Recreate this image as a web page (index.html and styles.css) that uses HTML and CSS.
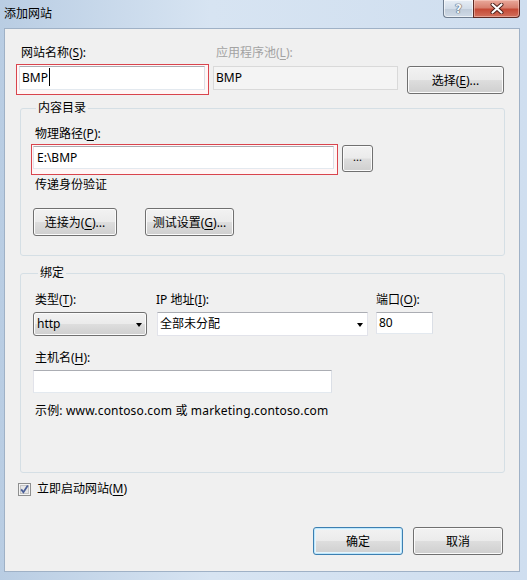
FILE: index.html
```html
<!DOCTYPE html>
<html lang="zh-CN">
<head>
<meta charset="utf-8">
<title>添加网站</title>
<link rel="stylesheet" href="styles.css">
</head>
<body>
<div class="window">
  <div class="titlebar">
    <span class="title">添加网站</span>
    <div class="caption">
      <div class="cap cap-help"><span class="q">?</span></div>
      <div class="cap cap-close">
        <svg width="14" height="11" viewBox="0 0 14 11"><path d="M2.5 1.5 L11.5 9.5 M11.5 1.5 L2.5 9.5" stroke="#4a1e18" stroke-width="4" stroke-linecap="round"/><path d="M2.5 1.5 L11.5 9.5 M11.5 1.5 L2.5 9.5" stroke="#ffffff" stroke-width="2.2" stroke-linecap="round"/></svg>
      </div>
    </div>
  </div>
  <div class="frame">
    <div class="client">
      <div class="site-grid">
        <div class="lbl lbl-site">网站名称(<u>S</u>):</div>
        <div class="lbl lbl-pool dis">应用程序池(<u>L</u>):</div>
        <div></div>
        <div class="err err-site"><div class="input in-site">BMP<i class="caret"></i></div></div>
        <div class="input ro">BMP</div>
        <button class="btn btn-select">选择(<u>E</u>)...</button>
      </div>

      <fieldset class="group group-content">
        <legend>内容目录</legend>
        <div class="lbl lbl-path">物理路径(<u>P</u>):</div>
        <div class="path-row">
          <div class="err err-path"><div class="input in-path">E:\BMP</div></div>
          <button class="btn btn-browse">...</button>
        </div>
        <div class="lbl lbl-auth">传递身份验证</div>
        <div class="btn-row">
          <button class="btn btn-connect">连接为(<u>C</u>)...</button>
          <button class="btn btn-test">测试设置(<u>G</u>)...</button>
        </div>
      </fieldset>

      <fieldset class="group group-bind">
        <legend>绑定</legend>
        <div class="bind-row">
          <div class="bcol bcol-type">
            <div class="lbl lbl-type">类型(<u>T</u>):</div>
            <div class="combo combo-btn">http<span class="arrow"></span></div>
          </div>
          <div class="bcol bcol-ip">
            <div class="lbl lbl-ip">IP 地址(<u>I</u>):</div>
            <div class="combo combo-field">全部未分配<span class="arrow"></span></div>
          </div>
          <div class="bcol bcol-port">
            <div class="lbl">端口(<u>O</u>):</div>
            <div class="input in-port">80</div>
          </div>
        </div>
        <div class="lbl lbl-host">主机名(<u>H</u>):</div>
        <div class="input in-host"></div>
        <div class="lbl lbl-example">示例: www.contoso.com 或 marketing.contoso.com</div>
      </fieldset>

      <div class="check-row">
        <span class="checkbox">
          <svg width="13" height="13" viewBox="0 0 13 13"><rect x="0.5" y="0.5" width="12" height="12" fill="#f4f4f4" stroke="#8e8f8f"/><rect x="2.5" y="2.5" width="8" height="8" fill="#e6e6e6" stroke="#c4c4c4"/><path d="M3.2 6.4 L5.4 9.2 L9.8 2.6" fill="none" stroke="#4a5f97" stroke-width="1.8"/></svg>
        </span>
        <span class="lbl lbl-start">立即启动网站(<u>M</u>)</span>
      </div>

      <div class="dlg-btns">
        <button class="btn btn-default">确定</button>
        <button class="btn btn-cancel">取消</button>
      </div>
    </div>
  </div>
</div>
</body>
</html>
```

FILE: styles.css
```css
* { box-sizing: border-box; }
html, body { margin: 0; padding: 0; }
body {
  width: 527px;
  height: 580px;
  overflow: hidden;
  font-family: "Noto Sans", "Noto Sans CJK SC", sans-serif;
  font-size: 12px;
  color: #000;
  background: #c7d8ec;
}
u { text-decoration: underline; text-underline-offset: 2px; }

.window {
  width: 527px;
  height: 580px;
  display: flex;
  flex-direction: column;
  background: linear-gradient(90deg, #b9cde3 0%, #d7e4f2 40%, #cfdeef 100%);
}

.titlebar {
  height: 28px;
  display: flex;
  align-items: flex-start;
  justify-content: space-between;
  flex: none;
}
.title {
  line-height: 28px;
  padding-left: 4px;
  font-size: 12px;
  color: #000;
}
.caption {
  display: flex;
  margin-right: 7px;
}
.cap {
  height: 18px;
  border: 1px solid #6f7d8f;
  border-top: none;
  display: flex;
  align-items: center;
  justify-content: center;
}
.cap-help {
  width: 30px;
  border-radius: 0 0 0 4px;
  border-right: none;
  background: linear-gradient(#e6edf5 0%, #d3dde9 50%, #bfcbd9 51%, #cfdae6 100%);
  box-shadow: inset 0 0 0 1px rgba(255,255,255,0.6);
}
.q {
  font-family: "DejaVu Sans", sans-serif;
  font-weight: bold;
  font-size: 12px;
  line-height: 12px;
  color: #f4f6f9;
  text-shadow: 0 0 1px #4b586a, 0 0 1px #4b586a, 0 0 1px #4b586a;
}
.cap-close {
  width: 47px;
  border-radius: 0 0 4px 0;
  border-color: #5e2a24;
  background: linear-gradient(#e9a99b 0%, #d8806f 45%, #c54a36 55%, #d2705c 100%);
  box-shadow: inset 0 0 0 1px rgba(255,220,210,0.45);
}

.frame {
  flex: 1;
  padding: 0 7px 8px 4px;
  display: flex;
}
.client {
  flex: 1;
  background: #f0f0f0;
  border: 1px solid #9fb1c6;
  display: flex;
  flex-direction: column;
}

.lbl { line-height: 16px; white-space: nowrap; }
.dis { color: #a3a3a3; }

/* top row */
.site-grid {
  display: grid;
  grid-template-columns: 193px 185px 97px;
  grid-template-rows: 16px 31px;
  column-gap: 4px;
  row-gap: 3px;
  margin: 16px 0 0 11px;
}
.lbl-site { padding-left: 5px; }
.lbl-pool { padding-left: 3px; }

.err {
  border: 1px solid #d9444d;
  background: #fff6f6;
  padding: 1px 3px 4px 2px;
}
.input {
  background: #fff;
  border: 1px solid #abadb3;
  border-color: #abadb3 #dbdfe6 #e3e9ef #e2e3ea;
  padding-left: 2px;
  line-height: 20px;
  white-space: nowrap;
}
.in-site { height: 24px; line-height: 22px; }
.caret {
  display: inline-block;
  width: 1px;
  height: 18px;
  background: #000;
  vertical-align: middle;
  margin-left: 1px;
  margin-top: -3px;
}
.ro {
  margin-top: 2px;
  height: 24px;
  line-height: 22px;
  background: #f4f4f4;
  border: 1px solid #d9d9d9;
  padding-left: 2px;
}

.btn {
  font: inherit;
  color: #000;
  height: 28px;
  padding: 0;
  border: 1px solid #707070;
  border-radius: 3px;
  background: linear-gradient(#f2f2f2 0%, #ebebeb 48%, #dddddd 52%, #cfcfcf 100%);
  box-shadow: inset 0 0 0 1px #fbfbfb;
  white-space: nowrap;
}
.btn-select { margin: 2px 0 0 5px; width: 97px; }

/* groups */
.group {
  margin: 0 14px 0 15px;
  padding: 0;
  border: 1px solid #d5dfe5;
  border-radius: 3px;
  min-width: 0;
}
.group legend {
  margin-left: 5px;
  padding: 0 2px;
  line-height: 16px;
}
.group-content {
  margin-top: 5px;
  padding: 0 0 19px 10px;
}
.lbl-path { margin-top: 10px; padding-left: 4px; }
.path-row { display: flex; margin-top: 2px; align-items: flex-start; }
.err-path { width: 307px; height: 31px; padding: 1px 3px 5px 1px; }
.in-path { height: 23px; line-height: 21px; padding-left: 3px; }
.btn-browse {
  margin: 1px 0 0 4px;
  width: 31px;
  height: 27px;
  font-size: 11px;
  line-height: 10px;
  padding-bottom: 4px;
}
.lbl-auth { margin-top: 2px; padding-left: 4px; }
.btn-row { display: flex; margin-top: 15px; }
.btn-connect { width: 84px; margin-left: 2px; }
.btn-test { width: 89px; margin-left: 28px; }

.group-bind {
  margin-top: 9px;
  padding: 0 0 53px 12px;
}
.bind-row { display: flex; margin-top: 11px; }
.bcol { display: flex; flex-direction: column; gap: 4px; }
.bcol-type { width: 114px; }
.bcol-ip { width: 211px; margin-left: 10px; }
.bcol-port { width: 57px; margin-left: 8px; }
.lbl-type { padding-left: 2px; }
.lbl-ip { margin-left: -1px; }

.combo {
  height: 24px;
  line-height: 22px;
  display: flex;
  justify-content: space-between;
  align-items: center;
  white-space: nowrap;
}
.combo-btn {
  border: 1px solid #707070;
  border-radius: 3px;
  background: linear-gradient(#f2f2f2 0%, #ebebeb 48%, #dddddd 52%, #cfcfcf 100%);
  box-shadow: inset 0 0 0 1px #fbfbfb;
  padding: 0 4px 0 3px;
}
.combo-field {
  background: #fff;
  border: 1px solid #e2e3ea;
  border-top-color: #abadb3;
  padding: 0 4px 0 2px;
}
.arrow {
  width: 0;
  height: 0;
  border-left: 3.5px solid transparent;
  border-right: 3.5px solid transparent;
  border-top: 4px solid #000;
  margin-top: 1px;
}
.in-port { height: 22px; line-height: 20px; padding-left: 2px; }

.lbl-host { margin-top: 14px; padding-left: 2px; }
.in-host { margin-top: 4px; width: 299px; height: 23px; }
.lbl-example { margin-top: 10px; padding-left: 2px; letter-spacing: 0.17px; }

.check-row {
  display: flex;
  align-items: center;
  margin: 8px 0 0 13px;
  height: 16px;
}
.checkbox { display: flex; width: 13px; height: 13px; }
.lbl-start { margin-left: 6px; }

.dlg-btns {
  display: flex;
  justify-content: flex-end;
  gap: 10px;
  margin-top: 30px;
  padding-right: 16px;
}
.btn-default, .btn-cancel { width: 90px; height: 28px; }
.btn-default {
  border-color: #3c7fb1;
  box-shadow: inset 0 0 0 1px #bfe7fb, inset 0 0 0 2px #e6f5fd;
}
```
